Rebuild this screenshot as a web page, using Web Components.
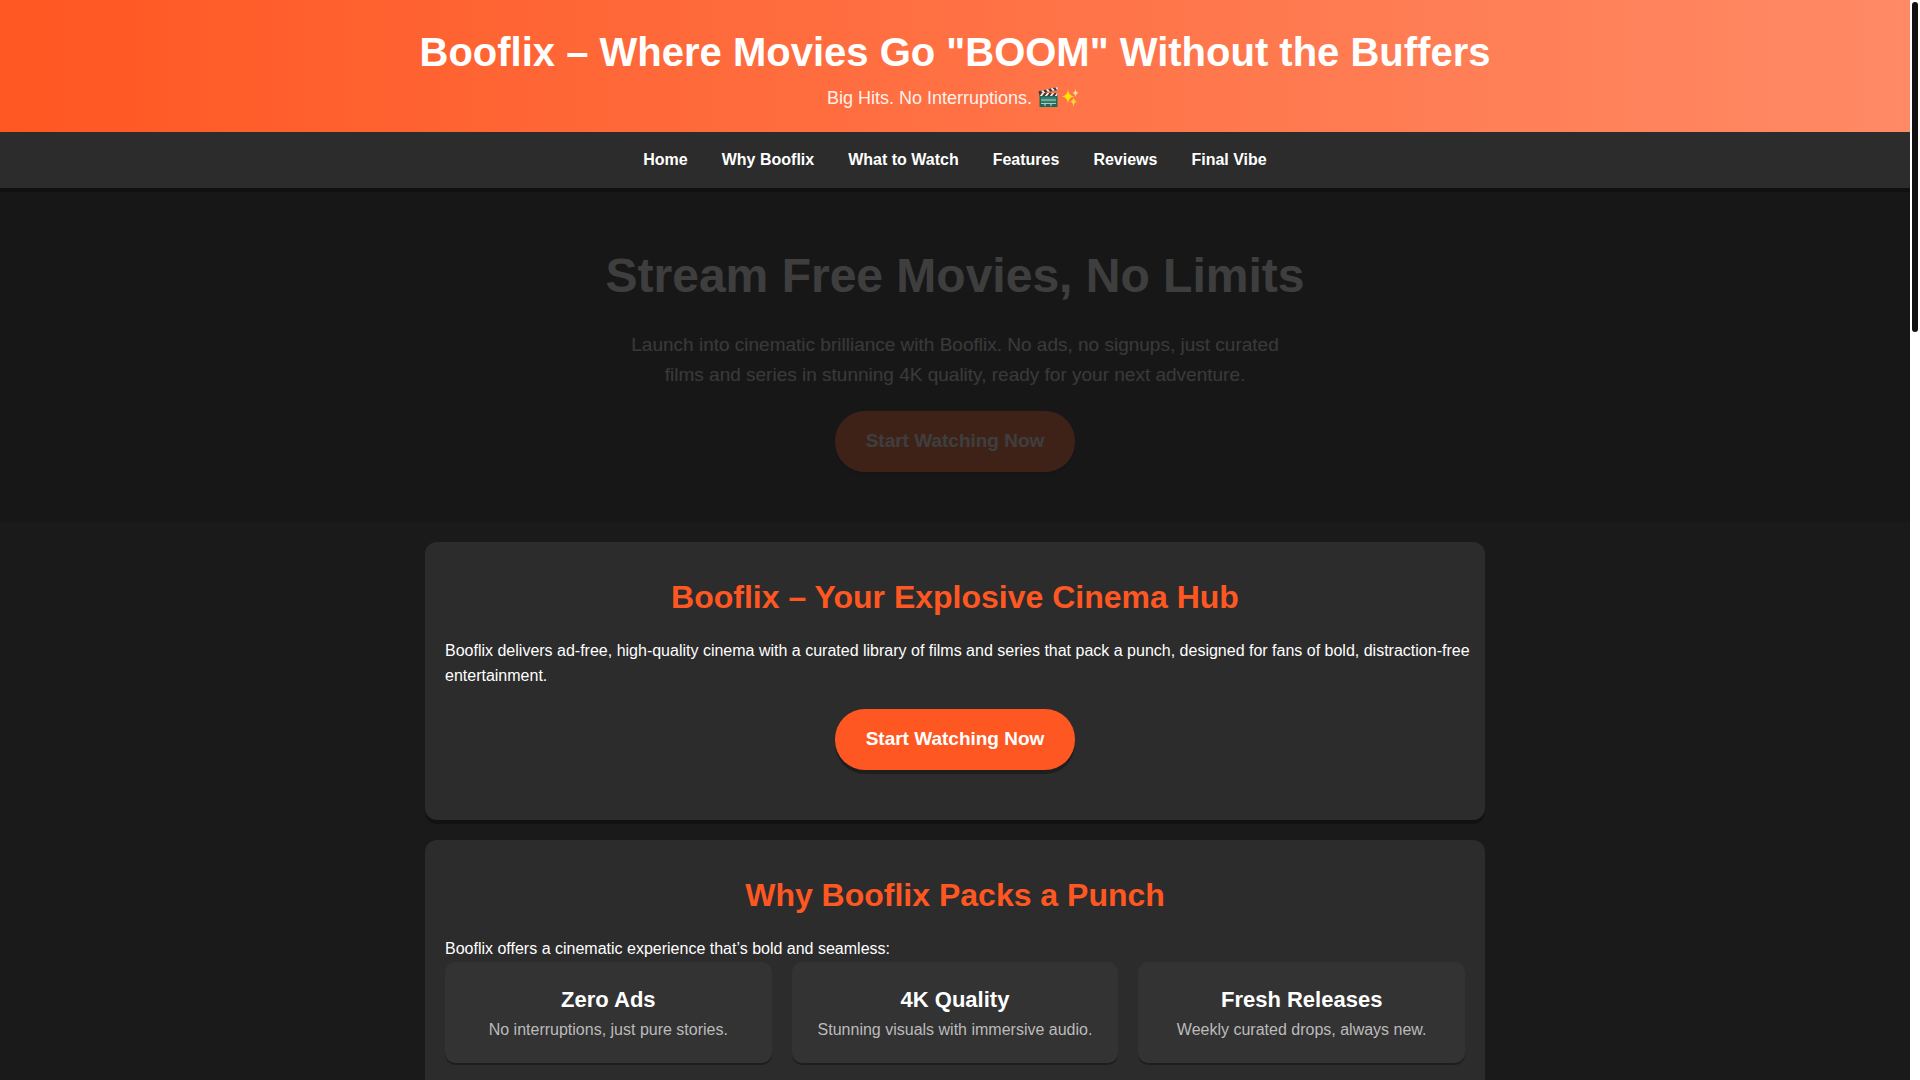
<!DOCTYPE html>
<html lang="en">
<head>
<meta charset="utf-8">
<meta name="viewport" content="width=device-width, initial-scale=1">
<title>Booflix</title>
<style>
  html, body { margin: 0; height: 100%; }
  body {
    background: #1a1a1a;
    color: #fff;
    font: 16px/26px "Liberation Sans", Arial, sans-serif;
    --accent: #ff5722;
    --accent-soft: #ff8a65;
    --surface: #2c2c2c;
    --surface-raised: #333;
  }
</style>
</head>
<body>
<boo-app>
  <boo-header heading="Booflix – Where Movies Go &quot;BOOM&quot; Without the Buffers">Big Hits. No Interruptions. <boo-clapper></boo-clapper><boo-sparkles></boo-sparkles></boo-header>
  <boo-nav>
    <boo-nav-link href="#home">Home</boo-nav-link>
    <boo-nav-link href="#why">Why Booflix</boo-nav-link>
    <boo-nav-link href="#watch">What to Watch</boo-nav-link>
    <boo-nav-link href="#features">Features</boo-nav-link>
    <boo-nav-link href="#reviews">Reviews</boo-nav-link>
    <boo-nav-link href="#vibe">Final Vibe</boo-nav-link>
  </boo-nav>
  <boo-hero heading="Stream Free Movies, No Limits">
    Launch into cinematic brilliance with Booflix. No ads, no signups, just curated films and series in stunning 4K quality, ready for your next adventure.
    <boo-cta slot="action" href="#watch">Start Watching Now</boo-cta>
  </boo-hero>
  <boo-sections>
    <boo-section id="home" heading="Booflix – Your Explosive Cinema Hub">
      Booflix delivers ad-free, high-quality cinema with a curated library of films and series that pack a punch, designed for fans of bold, distraction-free entertainment.
      <boo-cta slot="extra" class="spaced" href="#watch">Start Watching Now</boo-cta>
    </boo-section>
    <boo-section id="why" heading="Why Booflix Packs a Punch">
      Booflix offers a cinematic experience that’s bold and seamless:
      <boo-tiles slot="extra">
        <boo-tile heading="Zero Ads">No interruptions, just pure stories.</boo-tile>
        <boo-tile heading="4K Quality">Stunning visuals with immersive audio.</boo-tile>
        <boo-tile heading="Fresh Releases">Weekly curated drops, always new.</boo-tile>
      </boo-tiles>
    </boo-section>
  </boo-sections>
</boo-app>

<script>
  const define = (name, render) => customElements.define(name, class extends HTMLElement {
    constructor() {
      super();
      this.attachShadow({ mode: "open" });
    }
    connectedCallback() {
      this.shadowRoot.innerHTML = render(this);
      const heading = this.shadowRoot.querySelector("[data-heading]");
      if (heading) heading.textContent = this.getAttribute("heading");
      const link = this.shadowRoot.querySelector("a");
      if (link) link.href = this.getAttribute("href");
    }
  });

  // Page column plus the slim scroll rail on the right edge.
  define("boo-app", () => `
    <style>
      :host { display: grid; grid-template-columns: minmax(0, 1fr) 10px; height: 100vh; overflow: hidden; }
      .page { overflow: hidden; }
      .rail { background: #fff; padding: 2px; }
      .thumb { height: 31%; max-height: 330px; border-radius: 3px; background: #111; }
    </style>
    <div class="page"><slot></slot></div>
    <div class="rail" aria-hidden="true"><div class="thumb"></div></div>`);

  define("boo-header", () => `
    <style>
      :host { display: block; }
      header { padding: 20px; text-align: center; background: linear-gradient(90deg, var(--accent), var(--accent-soft)); }
      h1 { margin: 0; font-size: 40px; line-height: 64px; }
      p { margin: 0; font-size: 18px; line-height: 28px; opacity: .9; }
    </style>
    <header><h1 data-heading></h1><p><slot></slot></p></header>`);

  // Clapperboard: striped hinged bar over a teal slate.
  define("boo-clapper", () => `
    <style>
      :host { display: inline-block; }
      svg { display: block; width: 23px; height: 22px; margin-bottom: -4px; }
    </style>
    <svg viewBox="0 0 22 22" role="img" aria-label="clapper board">
      <path d="M1 5.2 20 1l.6 3L1.6 8z" fill="#302f2f"/>
      <path d="m3.5 4.7 2.2-.5 2 2.5-2.2.5zm4.8-1.1 2.2-.5 2 2.5-2.2.5zm4.8-1 2.2-.5 2 2.5-2.2.5zm4.6-1.1L20 1l.5 2.6-1 .5z" fill="#f5f5f5"/>
      <path d="M2 8h18v13H2z" fill="#00695c"/>
      <path d="M2 7h18v3H2z" fill="#302f2f"/>
      <path d="M4.5 7h2.3L4.6 10H2.3zm5 0h2.3l-2.2 3H7.3zm5 0h2.3l-2.2 3h-2.3zm4.8 0h.7v2l-.8 1h-2z" fill="#f5f5f5"/>
      <path d="M3.5 11.3h15v1.5h-15zm0 4h15v1.2h-15z" fill="#26897d"/>
      <path d="M3.5 13.5h15v1h-15zm0 3.7h15v.9h-15zM7 18h1v2H7zm6 0h1v2h-1z" fill="#e0f2f1"/>
    </svg>`);

  define("boo-sparkles", () => `
    <style>
      :host { display: inline-block; }
      svg { display: block; width: 23px; height: 22px; margin-bottom: -4px; }
    </style>
    <svg viewBox="0 0 22 22" role="img" aria-label="sparkles">
      <path d="M7.5 3.5Q8 9.500 13.500 10.500 8 11.500 7.500 17.500 7 11.500 1.500 10.500 7 9.500 7.500 3.500z" fill="#ffee00"/>
      <path d="M15 3Q15.500 6.500 18 7 15.500 7.500 15 11 14.500 7.500 12 7 14.500 6.500 15 3z" fill="#fff2a0"/>
      <path d="M13 11Q13.500 15 16.500 15.500 13.500 16 13 21 12.500 16 9.500 15.500 12.500 15 13 11z" fill="#f6e03a"/>
    </svg>`);

  define("boo-nav", () => `
    <style>
      :host { display: block; position: relative; z-index: 1; }
      nav { display: flex; flex-wrap: wrap; justify-content: center; gap: 34px; padding: 15px; background: var(--surface); box-shadow: 0 4px 0 rgba(0, 0, 0, .3); }
    </style>
    <nav><slot></slot></nav>`);

  define("boo-nav-link", () => `
    <style>
      :host { display: block; }
      a { display: block; color: #fff; font-weight: bold; text-decoration: none; }
      a:hover { color: var(--accent); }
    </style>
    <a><slot></slot></a>`);

  define("boo-hero", () => `
    <style>
      :host { display: block; background: #171717; }
      section { padding: 50px 20px; text-align: center; opacity: .17; }
      h2 { margin: 0 0 16px; font-size: 48px; line-height: 76px; }
      p { max-width: 680px; margin: 0 auto 21px; font-size: 19px; line-height: 30px; color: #e0e0e0; }
    </style>
    <section><h2 data-heading></h2><p><slot></slot></p><slot name="action"></slot></section>`);

  define("boo-cta", () => `
    <style>
      :host { display: flex; justify-content: center; }
      :host(.spaced) { margin: 20px 0; }
      a { padding: 15px 31px 16px; border-radius: 30px; background: var(--accent); box-shadow: 0 4px 0 rgba(0, 0, 0, .3); color: #fff; font-size: 19px; font-weight: bold; line-height: 30px; text-decoration: none; }
    </style>
    <a><slot></slot></a>`);

  define("boo-sections", () => `
    <style>
      :host { display: flex; flex-direction: column; gap: 20px; max-width: 1060px; margin: 0 auto; padding: 20px; }
    </style>
    <slot></slot>`);

  // Body copy may run a little into the right padding before it wraps.
  define("boo-section", () => `
    <style>
      :host { display: block; }
      section { padding: 30px 20px; border-radius: 12px; background: var(--surface); box-shadow: 0 4px 0 rgba(0, 0, 0, .3); }
      h2 { margin: 0 0 15px; color: var(--accent); font-size: 32px; line-height: 51px; text-align: center; }
      p { margin: 0 -16px 0 0; padding-bottom: 1px; line-height: 25px; }
    </style>
    <section><h2 data-heading></h2><p><slot></slot></p><slot name="extra"></slot></section>`);

  define("boo-tiles", () => `
    <style>
      :host { display: grid; grid-template-columns: repeat(auto-fit, minmax(250px, 1fr)); gap: 20px; }
    </style>
    <slot></slot>`);

  define("boo-tile", () => `
    <style>
      :host { display: block; padding: 20px; border-radius: 10px; background: var(--surface-raised); box-shadow: 0 2px 0 rgba(0, 0, 0, .3); text-align: center; }
      h3 { margin: 0; font-size: 22px; line-height: 35px; }
      p { margin: 0; color: #bbb; }
    </style>
    <h3 data-heading></h3><p><slot></slot></p>`);
</script>
</body>
</html>
